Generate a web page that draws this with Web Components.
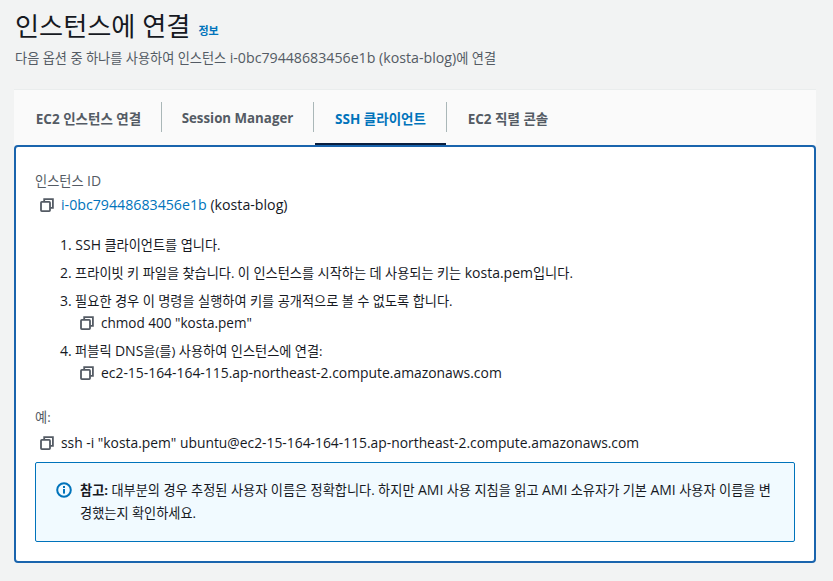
<!DOCTYPE html>
<html><head><meta charset="utf-8"><style>
html,body{margin:0;padding:0;background:#f2f3f3;}
body{font-family:"Open Sans","Noto Sans CJK KR",sans-serif;color:#16191f;overflow:hidden;height:581px;}
</style></head><body>
<connect-page>
<page-head></page-head>
<tab-bar></tab-bar>
<ssh-panel></ssh-panel>
</connect-page>
<template id="copy"><style>:host{display:inline-flex;width:14px;height:14px;flex:none}svg{display:block}</style>
<svg width="14" height="14" viewBox="0 0 14 14" fill="none" stroke="#545b64" stroke-width="1.8"><path d="M4.2 3.6V1.2H12.9V9.8H10.2"/><rect x="1" y="3.9" width="9" height="9.2" rx=".8"/></svg></template>
<script>
function def(name,html){customElements.define(name,class extends HTMLElement{constructor(){super();this.attachShadow({mode:"open"}).innerHTML=html;}});}
const copy=document.getElementById("copy").innerHTML;
def("copy-icon",copy);
def("connect-page",`<style>:host{display:block;padding:11px 17px 0 14px}</style><slot></slot>`);
def("page-head",`<style>:host{display:block;height:78px;padding-left:1px;box-sizing:border-box}
.t{display:flex;align-items:baseline;gap:8px;height:30px;line-height:30px}
h1{margin:0;font-size:26.2px;font-weight:400;color:#16191f}
a{font-size:11px;font-weight:700;color:#0073bb;position:relative;top:-1px}
p{margin:8px 0 0;font-size:13.2px;line-height:18px;color:#545b64}
i{font-style:normal;font-size:14.2px}</style>
<div class="t"><h1>인스턴스에 연결</h1><a>정보</a></div>
<p>다음 옵션 중 하나를 사용하여 인스턴스 <i>i-0bc79448683456e1b (kosta-blog)</i>에 연결</p>`);
def("tab-bar",`<style>:host{display:flex;height:56px;background:#fafafa;box-sizing:border-box;border-top:1px solid #eaeded;font-size:13.5px;font-weight:700;color:#545b64;align-items:stretch;padding-left:2px}
.tab{display:flex;align-items:center;justify-content:center;position:relative;box-sizing:border-box}
.sep{width:1px;background:#aab7b8;height:30px;margin-top:12px;flex:none}
.a{color:#0073bb}
.a::after{content:"";position:absolute;left:0;right:0;bottom:0;height:2px;background:#0a1f3f}
.s{font-size:13.3px}</style>
<div class="tab" style="width:145px"><span>EC2 인스턴스 연결</span></div><div class="sep"></div>
<div class="tab s" style="width:151px"><span>Session Manager</span></div><div class="sep"></div>
<div class="tab a" style="width:131px;margin-left:1px"><span>SSH 클라이언트</span></div><div class="sep"></div>
<div class="tab" style="width:122px"><span>EC2 직렬 콘솔</span></div>`);
def("ssh-panel",`<style>:host{display:block;box-sizing:border-box;width:802px;height:418px;background:#fff;border:2px solid #1a64ad;border-radius:4px;padding:25px 18px 0 19px;font-size:13.2px;line-height:18px;color:#16191f}
i{font-style:normal;font-size:14px}
.l{color:#545b64;height:18px}
.row{display:flex;align-items:center;gap:7px;height:18px;font-size:13.9px}
.id{margin:6px 0 0 5px;font-size:14.2px}
a{color:#0073bb}
ol{list-style:none;margin:0;padding:0 0 0 25px}
li{margin:0}
.n{margin-top:22px}
.s{margin-top:10px}
.c{margin:4px 0 0 20px}
.chm{font-size:13.55px}
.ex{margin-top:26px}
.cmd{margin:8px 0 0 5px;font-size:13.85px}
.note{display:flex;box-sizing:border-box;margin:10px 0 0 0;width:760px;height:80px;background:#f1faff;border:1px solid #0073bb;border-radius:2px;padding:16px 20px 0 20px;gap:8px;line-height:22.5px}
.note svg{flex:none;margin-top:3px}
.note b{font-weight:700}
.line{display:block;white-space:nowrap}</style>
<div class="l">인스턴스 <i>ID</i></div>
<div class="row id"><copy-icon></copy-icon><span><a>i-0bc79448683456e1b</a> (kosta-blog)</span></div>
<ol class="n">
<li><i>1. SSH</i> 클라이언트를 엽니다.</li>
<li class="s"><i>2.</i> 프라이빗 키 파일을 찾습니다. 이 인스턴스를 시작하는 데 사용되는 키는 <i>kosta.pem</i>입니다.</li>
<li class="s"><i>3.</i> 필요한 경우 이 명령을 실행하여 키를 공개적으로 볼 수 없도록 합니다.<div class="row c chm"><copy-icon></copy-icon><span>chmod 400 "kosta.pem"</span></div></li>
<li class="s"><i>4.</i> 퍼블릭 <i>DNS</i>을(를) 사용하여 인스턴스에 연결:<div class="row c"><copy-icon></copy-icon><span>ec2-15-164-164-115.ap-northeast-2.compute.amazonaws.com</span></div></li>
</ol>
<div class="l ex">예:</div>
<div class="row cmd"><copy-icon></copy-icon><span>ssh -i "kosta.pem" ubuntu@ec2-15-164-164-115.ap-northeast-2.compute.amazonaws.com</span></div>
<div class="note"><svg width="16" height="16" viewBox="0 0 16 16"><circle cx="8" cy="8" r="6.8" fill="none" stroke="#0073bb" stroke-width="2"/><rect x="7" y="7" width="2" height="4.6" fill="#0073bb"/><rect x="7" y="4" width="2" height="2" fill="#0073bb"/></svg><div><span class="line"><b>참고:</b> 대부분의 경우 추정된 사용자 이름은 정확합니다. 하지만 <i>AMI</i> 사용 지침을 읽고 <i>AMI</i> 소유자가 기본 <i>AMI</i> 사용자 이름을 변</span><span class="line">경했는지 확인하세요.</span></div></div>`);
</script>
</body></html>
